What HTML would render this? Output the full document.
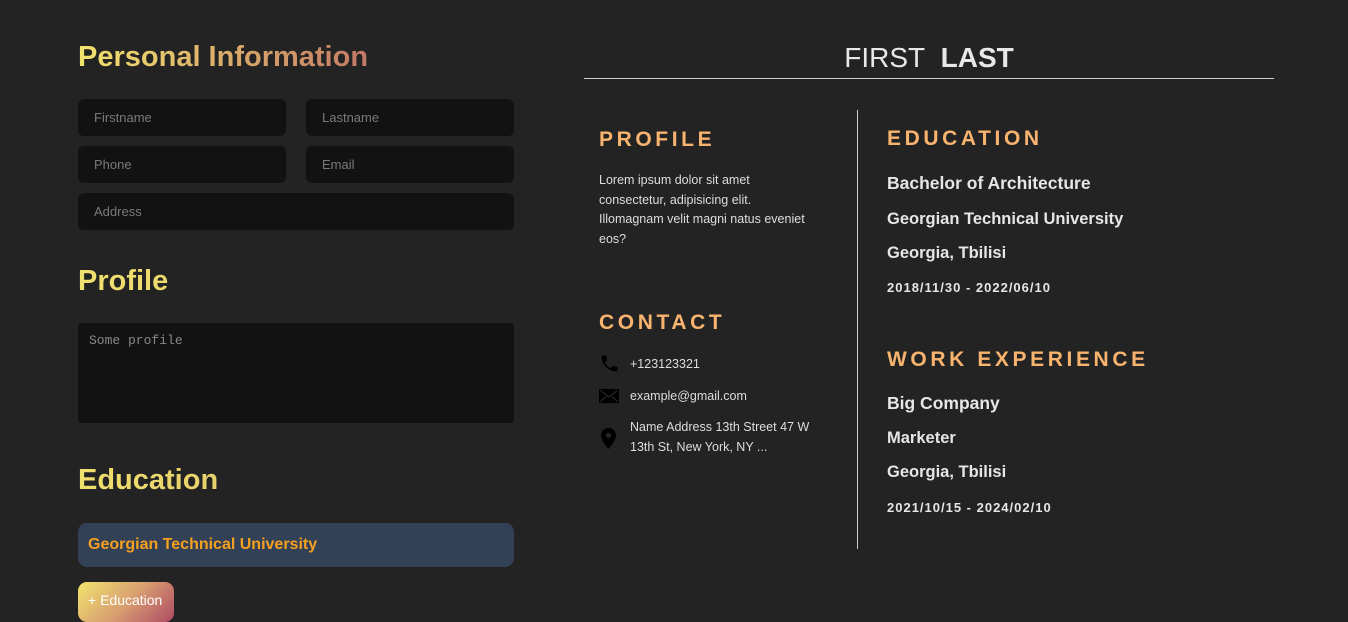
<!DOCTYPE html>
<html><head><style>
*{margin:0;padding:0;box-sizing:border-box}
body{width:1348px;height:616px;background:#232323;font-family:"Liberation Sans",sans-serif;position:relative;overflow:hidden;color:#ddd}
.a{position:absolute}
.h{font-weight:bold;font-size:29px;background-image:linear-gradient(90deg,#f2e46e,#c27766);-webkit-background-clip:text;background-clip:text;color:transparent}
.in{position:absolute;background:#121212;border-radius:6px;height:37px;font-size:13px;color:#7a7a7a;padding:11px 16px}
.sh{position:absolute;color:#f8b46e;font-weight:bold;font-size:21px;letter-spacing:3.6px}
.t{position:absolute;font-size:12.5px;color:#ddd;line-height:19.5px;white-space:nowrap}
.b{position:absolute;font-weight:bold;color:#e6e6e6;font-size:17.5px}
.d{position:absolute;font-weight:bold;color:#e6e6e6;font-size:13px;letter-spacing:1px}
</style></head><body>
<div class="a h" style="left:78px;top:41px;width:294px">Personal Information</div>
<div class="in" style="left:78px;top:99px;width:208px">Firstname</div>
<div class="in" style="left:306px;top:99px;width:208px">Lastname</div>
<div class="in" style="left:78px;top:146px;width:208px">Phone</div>
<div class="in" style="left:306px;top:146px;width:208px">Email</div>
<div class="in" style="left:78px;top:193px;width:436px">Address</div>
<div class="a h" style="left:78px;top:265px;width:436px;background-image:linear-gradient(90deg,#f0e06e,#e0c46a)">Profile</div>
<div class="a" style="left:78px;top:323px;width:436px;height:100px;background:#121212;border-radius:4px;font-family:'Liberation Mono',monospace;font-size:13px;color:#888;padding:10px 11px">Some profile</div>
<div class="a h" style="left:78px;top:464px;width:436px;background-image:linear-gradient(90deg,#f0e06e,#d8b068)">Education</div>
<div class="a" style="left:78px;top:523px;width:436px;height:44px;background:#334156;border-radius:9px;color:#f5a020;font-weight:bold;font-size:16px;padding:13px 10px">Georgian Technical University</div>
<div class="a" style="left:78px;top:582px;width:96px;height:40px;border-radius:9px;background:linear-gradient(135deg,#f2e46e,#d9a070 50%,#b04a66);color:#fff;font-size:14px;padding:10px 10px;white-space:nowrap">+ Education</div>

<div class="a" style="left:584px;top:42px;width:690px;text-align:center;font-size:28px;color:#e8e8e8">FIRST&nbsp; <b>LAST</b></div>
<div class="a" style="left:584px;top:78px;width:690px;height:1px;background:#ccc"></div>
<div class="a" style="left:857px;top:110px;width:1px;height:439px;background:#ccc"></div>

<div class="sh" style="left:599px;top:128px">PROFILE</div>
<div class="t" style="left:599px;top:171px">Lorem ipsum dolor sit amet<br>consectetur, adipisicing elit.<br>Illomagnam velit magni natus eveniet<br>eos?</div>
<div class="sh" style="left:599px;top:311px">CONTACT</div>
<svg class="a" style="left:599px;top:353px" width="21" height="21" viewBox="0 0 24 24"><path fill="#000" d="M6.6 10.8c1.4 2.8 3.8 5.1 6.6 6.6l2.2-2.2c.3-.3.7-.4 1-.2 1.1.4 2.300.6 3.6.6.6 0 1 .4 1 1V20c0 .6-.4 1-1 1C10.6 21 3 13.4 3 4c0-.6.4-1 1-1h3.5c.6 0 1 .4 1 1 0 1.3.2 2.500.6 3.6.1.3 0 .7-.2 1z"/></svg>
<div class="t" style="left:630px;top:355px">+123123321</div>
<svg class="a" style="left:599px;top:389px" width="20" height="14" viewBox="0 0 20 14"><rect width="20" height="14" fill="#000"/><path d="M1 1l9 7 9-7M1 13l6.5-6M19 13l-6.5-6" stroke="#232323" stroke-width="1.2" fill="none"/></svg>
<div class="t" style="left:630px;top:387px">example@gmail.com</div>
<svg class="a" style="left:601px;top:428px" width="15" height="21" viewBox="0 0 15 21"><path fill="#000" d="M7.5 0C3.4 0 0 3.3 0 7.4 0 12.9 7.5 21 7.5 21S15 12.9 15 7.4C15 3.3 11.6 0 7.5 0zm0 10a2.6 2.6 0 110-5.2 2.6 2.6 0 010 5.2z"/></svg>
<div class="t" style="left:630px;top:418px">Name Address 13th Street 47 W<br>13th St, New York, NY ...</div>

<div class="sh" style="left:887px;top:127px">EDUCATION</div>
<div class="b" style="left:887px;top:173px">Bachelor of Architecture</div>
<div class="b" style="left:887px;top:210px;font-size:16.5px">Georgian Technical University</div>
<div class="b" style="left:887px;top:244px;font-size:16.5px">Georgia, Tbilisi</div>
<div class="d" style="left:887px;top:280px">2018/11/30 - 2022/06/10</div>
<div class="sh" style="left:887px;top:348px">WORK EXPERIENCE</div>
<div class="b" style="left:887px;top:393px">Big Company</div>
<div class="b" style="left:887px;top:429px;font-size:16.5px">Marketer</div>
<div class="b" style="left:887px;top:463px;font-size:16.5px">Georgia, Tbilisi</div>
<div class="d" style="left:887px;top:500px">2021/10/15 - 2024/02/10</div>
</body></html>
